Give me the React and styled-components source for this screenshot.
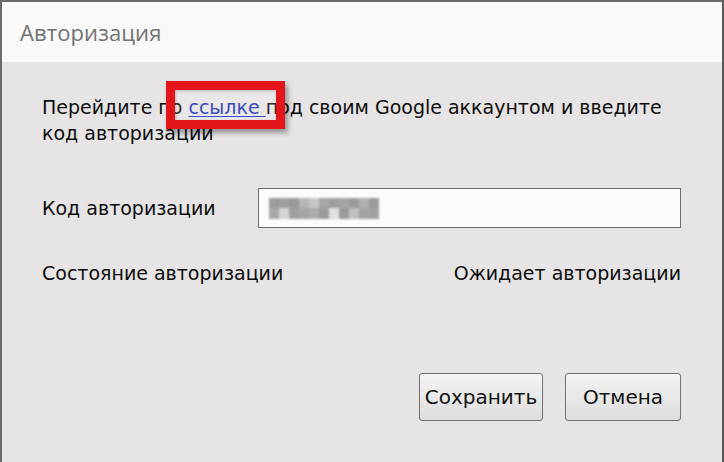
import React from "react";
import styled, { createGlobalStyle } from "styled-components";

const Global = createGlobalStyle`
  html, body { margin: 0; padding: 0; background: #e6e4e4; }
  body { font-family: "DejaVu Sans", "Noto Sans", sans-serif; }
  * { box-sizing: border-box; }
`;

const Window = styled.div`
  width: 724px;
  height: 462px;
  display: flex;
  flex-direction: column;
  border-top: 2px solid #6a6a6a;
  border-left: 2px solid #6a6a6a;
  border-right: 2px solid #5a5a5a;
  background: #e6e4e4;
  overflow: hidden;
`;

const TitleBar = styled.div`
  height: 60px;
  flex: none;
  display: flex;
  align-items: center;
  padding-left: 18px;
  background: #f9f9f9;
  font-family: "Open Sans", "Noto Sans", sans-serif;
  font-size: 22px;
  color: #727272;
  letter-spacing: 0.1px;
`;

const Body = styled.div`
  flex: 1;
  display: flex;
  flex-direction: column;
  padding: 32px 41px 0 40px;
  color: #0d0d0d;
  font-size: 19px;
`;

const Message = styled.p`
  margin: 0;
  line-height: 26px;
`;

const LinkWrap = styled.span`
  position: relative;
`;

const Link = styled.a`
  color: #2233b8;
  text-decoration: underline;
  text-underline-offset: 2px;
`;

const Highlight = styled.span`
  position: absolute;
  left: -22px;
  top: -15px;
  width: 119px;
  height: 48px;
  border: 9px solid #e3141a;
  box-shadow: 3px 4px 5px rgba(0, 0, 0, 0.35), inset 1px 1px 3px rgba(0, 0, 0, 0.2);
  background: rgba(255, 255, 255, 0.12);
  pointer-events: none;
`;

const Row = styled.div`
  display: flex;
  align-items: center;
  justify-content: space-between;
  margin-top: ${(p) => p.$gap}px;
  height: ${(p) => p.$h}px;
`;

const Label = styled.span`
  line-height: 26px;
`;

const CodeInput = styled.div`
  width: 423px;
  height: 40px;
  border: 1px solid #6e6e6e;
  background: #fbfbfb;
  display: flex;
  align-items: center;
  padding-left: 10px;
`;

const Mosaic = styled.div`
  display: grid;
  grid-template-columns: repeat(11, 10px);
  grid-auto-rows: 10.5px;
  filter: blur(0.9px);
`;

const Pix = styled.span`
  background: ${(p) => p.$c};
`;

const Buttons = styled.div`
  display: flex;
  justify-content: flex-end;
  gap: 22px;
  margin-top: 87px;
`;

const Button = styled.button`
  width: ${(p) => p.$w}px;
  height: 48px;
  border: 1px solid #707070;
  border-radius: 3px;
  background: linear-gradient(#f4f4f4, #e9e9e9 50%, #dcdcdc);
  font-family: inherit;
  font-size: 20px;
  color: #111;
  padding: 0;
`;

const mosaic = [
  "#9c9c9c", "#a0a0a0", "#9a9a9a", "#b8b8b8", "#c6c6c6", "#a6a6a6", "#9e9e9e", "#a4a4a4", "#9c9c9c", "#b0b0b0", "#9a9a9a",
  "#a8a8a8", "#d6d6d6", "#a0a0a0", "#a4a4a4", "#acacac", "#9c9c9c", "#e0e0e0", "#9a9a9a", "#c0c0c0", "#a2a2a2", "#a0a0a0",
];

export default function App() {
  return (
    <>
      <Global />
      <Window>
        <TitleBar>Авторизация</TitleBar>
        <Body>
          <Message>
            Перейдите по{" "}
            <LinkWrap>
              <Link>ссылке </Link>
              <Highlight />
            </LinkWrap>
            под своим Google аккаунтом и введите
            <br />
            код авторизации
          </Message>
          <Row $gap={42} $h={40}>
            <Label>Код авторизации</Label>
            <CodeInput>
              <Mosaic>
                {mosaic.map((c, i) => (
                  <Pix key={i} $c={c} />
                ))}
              </Mosaic>
            </CodeInput>
          </Row>
          <Row $gap={32} $h={26}>
            <Label>Состояние авторизации</Label>
            <Label>Ожидает авторизации</Label>
          </Row>
          <Buttons>
            <Button $w={124}>Сохранить</Button>
            <Button $w={116}>Отмена</Button>
          </Buttons>
        </Body>
      </Window>
    </>
  );
}
